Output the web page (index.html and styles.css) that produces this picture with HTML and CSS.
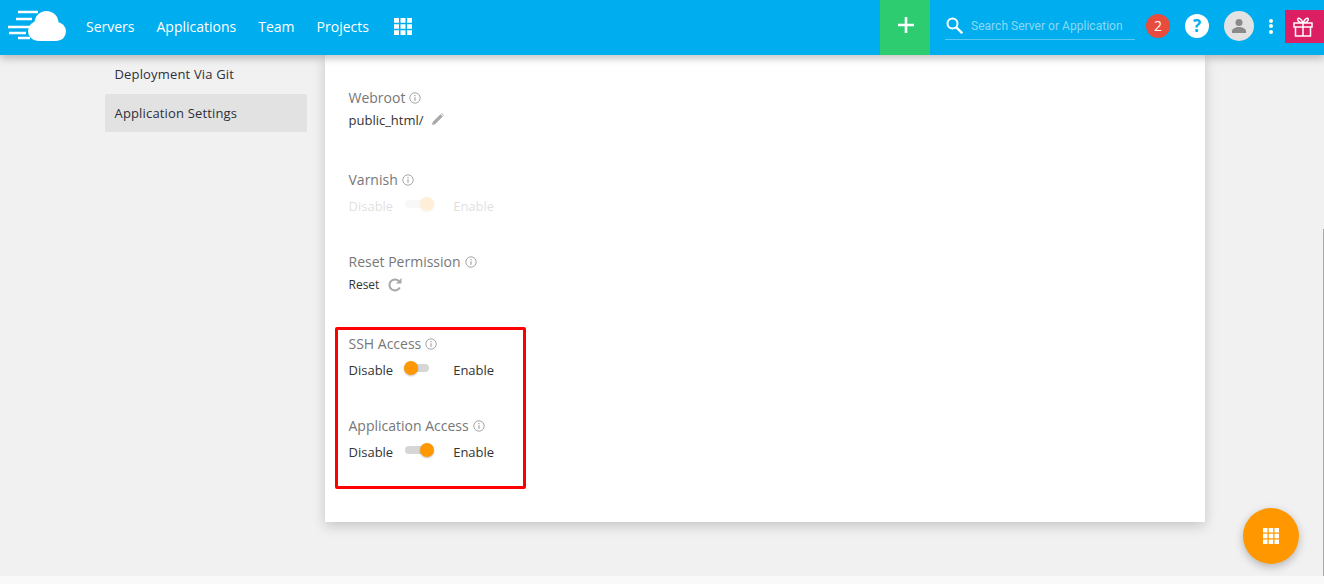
FILE: index.html
```html
<!DOCTYPE html>
<html lang="en">
<head>
<meta charset="utf-8">
<title>Application Settings</title>
<link rel="stylesheet" href="styles.css">
</head>
<body>
<header class="topbar">
  <svg class="logo" viewBox="0 0 60 32" width="60" height="32">
    <g fill="#fff">
      <circle cx="30" cy="21" r="10"/>
      <circle cx="38.500" cy="13" r="12"/>
      <circle cx="48.500" cy="21.500" r="9.500"/>
      <path d="M30 20h19v11H30z"/>
    </g>
    <g stroke="#fff" stroke-width="2.600">
      <path d="M10 2h20M8 9h16M0 17h22M1 23h17M10 28h12"/>
    </g>
  </svg>
  <nav class="nav">
    <a>Servers</a><a>Applications</a><a>Team</a><a>Projects</a>
    <svg class="grid-icon" viewBox="0 0 18 17" width="18" height="17"><path fill="#fff" d="M0 0h5v4.700H0zM6.500 0h5v4.700h-5zM13 0h5v4.700h-5zM0 6.150h5v4.700H0zM6.500 6.150h5v4.700h-5zM13 6.150h5v4.700h-5zM0 12.300h5V17H0zM6.500 12.300h5V17h-5zM13 12.300h5V17h-5z"/></svg>
  </nav>
  <div class="add"><svg viewBox="0 0 16 16" width="16" height="16"><path stroke="#fff" stroke-width="2.600" d="M8 0v16M0 8h16"/></svg></div>
  <div class="search">
    <svg viewBox="0 0 17 17" width="17" height="17"><circle cx="6.500" cy="6.500" r="5" fill="none" stroke="#fff" stroke-width="2"/><path stroke="#fff" stroke-width="2.400" d="M10.300 10.300l6 6"/></svg>
    <span>Search Server or Application</span>
  </div>
  <div class="badge">2</div>
  <div class="help">?</div>
  <div class="avatar"><svg viewBox="0 0 16 16" width="16" height="16"><circle cx="8" cy="4.500" r="3.500" fill="#8a8a8a"/><path fill="#8a8a8a" d="M1 15v-2c0-2.500 4.500-4 7-4s7 1.500 7 4v2z"/></svg></div>
  <div class="dots"><i></i><i></i><i></i></div>
  <div class="gift"><svg viewBox="0 0 20 20" width="20" height="20" fill="none" stroke="#fff" stroke-width="1.500"><path d="M1 6h18v4H1zM2.500 10v9h15v-9M10 6v13M10 6C8 1.500 5.500 .5 4.800 1.800 4 3.300 6.500 6 10 6zM10 6c2-4.500 4.500-5.500 5.200-4.200C16 3.300 13.500 6 10 6z"/></svg></div>
</header>

<main class="page">
  <aside class="side">
    <a class="side-item">Deployment Via Git</a>
    <a class="side-item active">Application Settings</a>
  </aside>
  <section class="card">
    <div class="field">
      <div class="label">Webroot <svg class="info"><use href="#i"/></svg></div>
      <div class="value">public_html/ <svg class="pencil" viewBox="0 0 12 12" width="12" height="12"><path fill="#a8a8a8" d="M0 12l.7-3L8.500 1.200 10.800 3.500 3 11.300zM9.200.5l.6-.5 2.200 2.200-.5.600z"/></svg></div>
    </div>
    <div class="field">
      <div class="label">Varnish <svg class="info"><use href="#i"/></svg></div>
      <div class="switch-row faded"><span>Disable</span><span class="toggle on"></span><span>Enable</span></div>
    </div>
    <div class="field">
      <div class="label">Reset Permission <svg class="info"><use href="#i"/></svg></div>
      <div class="value reset">Reset <svg class="refresh" viewBox="0 0 14 14" width="14" height="14" fill="none"><path stroke="#a8a8a8" stroke-width="2" d="M11.800 9.500A5.500 5.500 0 1 1 10.800 3"/><path fill="#a8a8a8" d="M13.500 0v5.500H8z"/></svg></div>
    </div>
    <div class="field">
      <div class="label">SSH Access <svg class="info"><use href="#i"/></svg></div>
      <div class="switch-row"><span>Disable</span><span class="toggle"></span><span>Enable</span></div>
    </div>
    <div class="field">
      <div class="label">Application Access <svg class="info"><use href="#i"/></svg></div>
      <div class="switch-row"><span>Disable</span><span class="toggle on"></span><span>Enable</span></div>
    </div>
  </section>
</main>

<div class="highlight"></div>
<button class="fab"><svg viewBox="0 0 16 16" width="16" height="16"><path fill="#fff" d="M0 0h4.500v4.500H0zM5.750 0h4.500v4.500h-4.500zM11.500 0H16v4.500h-4.500zM0 5.750h4.500v4.500H0zM5.750 5.750h4.500v4.500h-4.500zM11.500 5.750H16v4.500h-4.500zM0 11.500h4.500V16H0zM5.750 11.500h4.500V16h-4.500zM11.500 11.500H16V16h-4.500z"/></svg></button>
<div class="scroll-thumb"></div>
<div class="footer-strip"></div>

<svg class="defs" width="0" height="0">
  <symbol id="i" viewBox="0 0 12 12"><circle cx="6" cy="6" r="5.200" fill="none" stroke="#a6a6a6"/><path stroke="#a6a6a6" stroke-width="1.200" d="M6 5.200v3.600M6 3v1.300"/></symbol>
</svg>
</body>
</html>
```

FILE: styles.css
```css
* { box-sizing: border-box; }
html, body { margin: 0; height: 100%; }
body {
  background: #f1f1f1;
  font-family: "Open Sans", "Liberation Sans", sans-serif;
  font-size: 13px;
  color: #333;
  overflow: hidden;
}
.topbar {
  position: relative;
  z-index: 2;
  height: 55px;
  background: #00adee;
  box-shadow: 0 3px 8px rgba(0, 0, 0, .25);
  display: flex;
  align-items: center;
  padding: 0 0 3px 8px;
}
.logo { flex: none; }
.nav {
  display: flex;
  align-items: center;
  margin-left: 18px;
  gap: 22px;
  color: #fff;
  font-size: 14px;
  font-weight: 500;
  flex: 1;
}
.nav .grid-icon { margin-left: 3px; }
.add {
  align-self: stretch;
  width: 50px;
  margin-bottom: -3px;
  padding: 0 0 5px 2px;
  background: #2ecc71;
  display: flex;
  align-items: center;
  justify-content: center;
}
.search {
  width: 190px;
  height: 28px;
  margin-left: 15px;
  border-bottom: 1px solid rgba(255, 255, 255, .35);
  display: flex;
  align-items: center;
  gap: 8px;
  padding-left: 1px;
  color: rgba(255, 255, 255, .55);
  font-family: Roboto, "Liberation Sans", sans-serif;
  font-size: 12px;
  letter-spacing: .03px;
  white-space: nowrap;
}
.badge {
  width: 24px;
  height: 24px;
  margin-left: 11px;
  border-radius: 50%;
  background: #e74c3c;
  color: #fff;
  font-size: 14px;
  line-height: 24px;
  text-align: center;
}
.help {
  width: 24px;
  height: 24px;
  margin-left: 15px;
  border-radius: 50%;
  background: #fff;
  color: #00adee;
  font-size: 17px;
  font-weight: 700;
  line-height: 24px;
  text-align: center;
}
.avatar {
  width: 30px;
  height: 30px;
  margin-left: 15px;
  border-radius: 50%;
  background: #e2e2e2;
  display: flex;
  align-items: center;
  justify-content: center;
}
.dots {
  width: 4px;
  margin-left: 15px;
  display: flex;
  flex-direction: column;
  gap: 1.500px;
}
.dots i { width: 4px; height: 4px; border-radius: 50%; background: #fff; }
.gift {
  width: 39px;
  height: 33px;
  margin-left: 12px;
  margin-top: 10px;
  padding-right: 4px;
  background: #dc1f63;
  display: flex;
  align-items: center;
  justify-content: center;
  align-self: flex-start;
}
.page {
  display: flex;
  align-items: flex-start;
  padding-left: 105px;
  gap: 18px;
}
.side {
  width: 202px;
  display: flex;
  flex-direction: column;
}
.side-item {
  height: 38px;
  line-height: 38px;
  padding-left: 9.500px;
  border-radius: 2px;
  color: #2f2f3a;
  letter-spacing: .16px;
}
.side-item.active { margin-top: 1px; background: #e2e2e2; }
.card {
  width: 880px;
  height: 467px;
  background: #fff;
  box-shadow: 0 4px 12px rgba(0, 0, 0, .18);
  padding: 33px 24px 0 23.500px;
}
.field { height: 82px; }
.label {
  height: 20px;
  line-height: 20px;
  font-size: 14px;
  color: #777;
  display: flex;
  align-items: center;
  gap: 4px;
}
.info { width: 12px; height: 12px; }
.value {
  margin-top: 3px;
  height: 18px;
  line-height: 18px;
  color: #333;
  display: flex;
  align-items: center;
  gap: 8px;
}
.value.reset { font-size: 12px; gap: 9px; margin-top: 4px; }
.pencil { margin-top: -3px; }
.switch-row {
  margin-top: 6px;
  height: 20px;
  display: flex;
  align-items: center;
  color: #333;
}
.switch-row.faded { opacity: .15; }
.toggle {
  position: relative;
  width: 24px;
  height: 8px;
  margin: -5px 24px 0 12px;
  border-radius: 4px;
  background: #d6d6d6;
}
.toggle::after {
  content: "";
  position: absolute;
  left: -1px;
  top: -3px;
  width: 14px;
  height: 14px;
  border-radius: 50%;
  background: #ff9800;
  box-shadow: 0 1px 2px rgba(0, 0, 0, .25);
}
.toggle.on::after { left: 15px; }
.highlight {
  position: absolute;
  left: 335px;
  top: 327px;
  width: 191px;
  height: 162px;
  border: 3px solid #f00;
  border-radius: 2px;
}
.fab {
  position: absolute;
  left: 1243px;
  top: 508px;
  width: 56px;
  height: 56px;
  padding: 0;
  border: 0;
  border-radius: 50%;
  background: #ff9800;
  box-shadow: 0 3px 8px rgba(0, 0, 0, .25);
  display: flex;
  align-items: center;
  justify-content: center;
}
.scroll-thumb {
  position: absolute;
  right: 0;
  top: 229px;
  bottom: 8px;
  width: 1px;
  background: #a9a9a9;
}
.footer-strip {
  position: absolute;
  left: 0;
  right: 0;
  bottom: 0;
  height: 8px;
  background: #f9f9f9;
}
.defs { position: absolute; }
```
